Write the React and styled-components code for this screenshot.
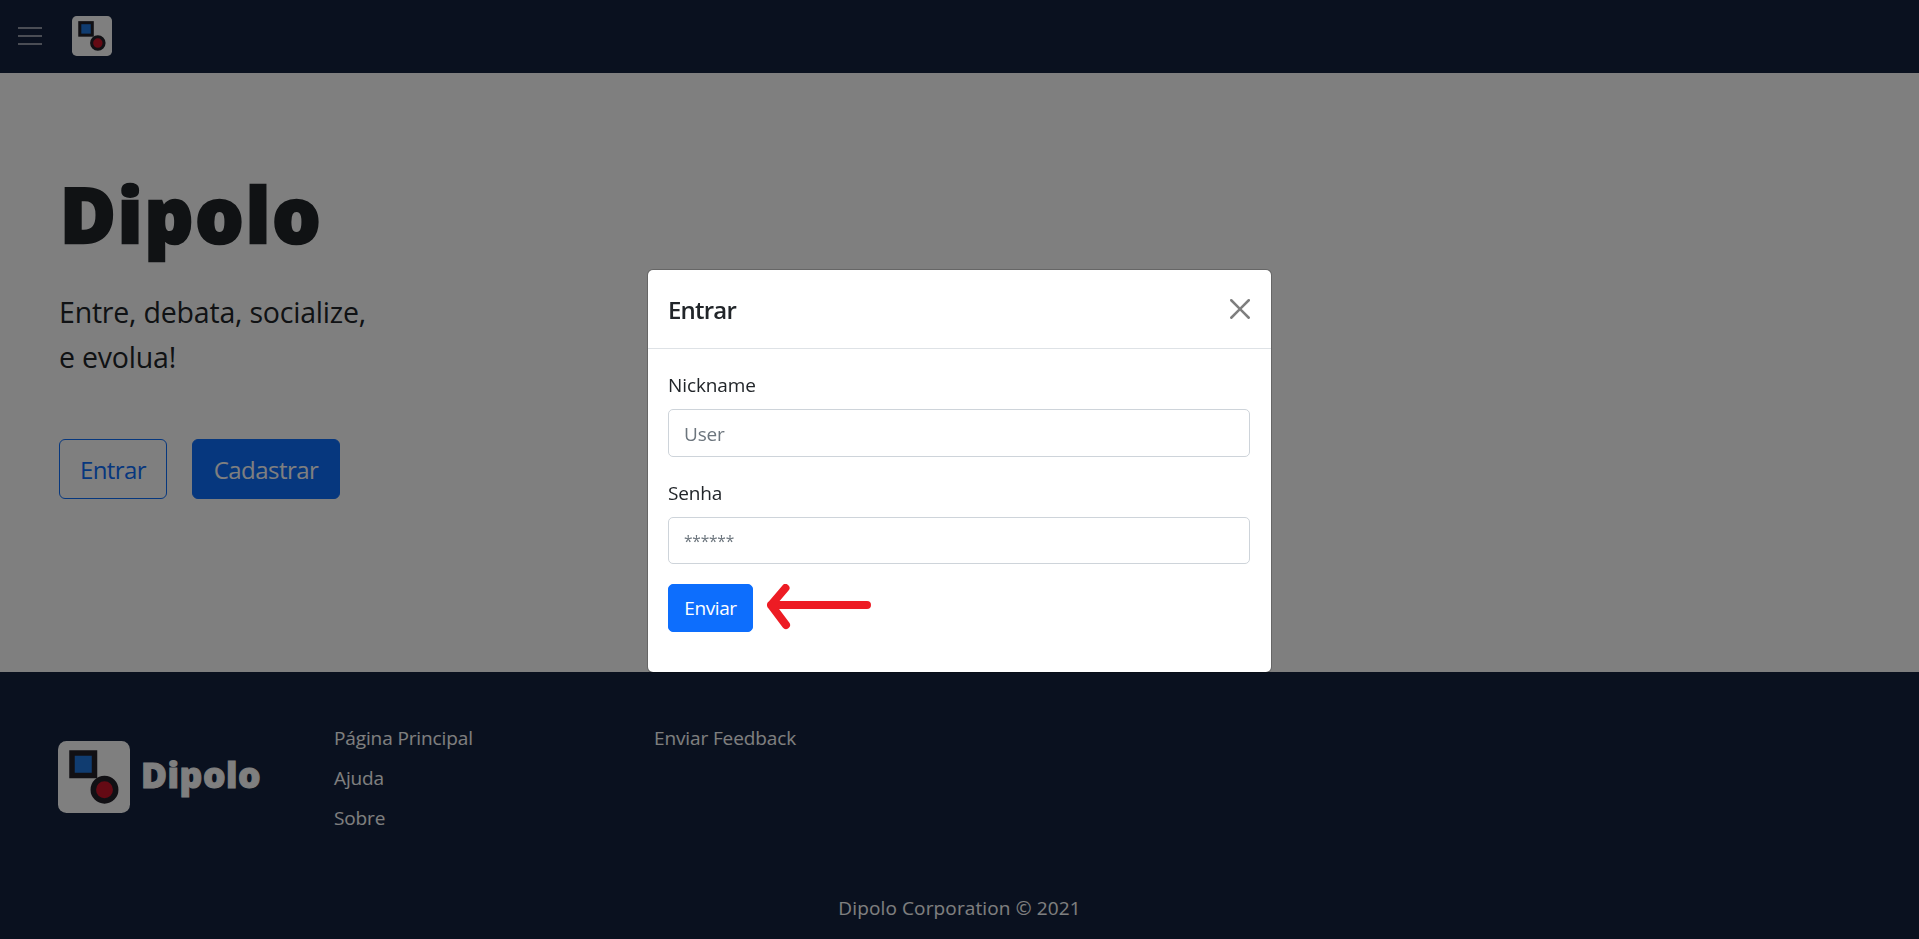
import React from 'react';
import styled, { createGlobalStyle, css } from 'styled-components';

const Global = createGlobalStyle`
  * { box-sizing: border-box; }
  body {
    margin: 0;
    height: 939px;
    overflow: hidden;
    background: #fff;
    color: #212529;
    font-family: "Open Sans", "Noto Sans", sans-serif;
    font-size: 19px;
    line-height: 30px;
  }
`;

const Page = styled.div`
  display: flex;
  flex-direction: column;
  height: 939px;
`;

const Navbar = styled.header`
  flex: none;
  height: 73px;
  display: flex;
  align-items: center;
  gap: 30px;
  padding: 0 18px 1px;
  background: #15233e;
`;

const MenuButton = styled.button`
  display: flex;
  padding: 0;
  border: 0;
  background: none;
  color: rgba(255, 255, 255, 0.55);
`;

const Hero = styled.main`
  flex: 1;
  padding: 93px 59px 0;
`;

const HeroTitle = styled.h1`
  margin: 0;
  padding-left: 1px;
  font-size: 76px;
  line-height: 96px;
  font-weight: 800;
  -webkit-text-stroke: 2.4px currentColor;
  letter-spacing: ${(p) => p.$spacing}px;
`;

const Lead = styled.p`
  margin: 28px 0 0;
  font-size: 28.5px;
  line-height: 45px;
  font-weight: 400;
  letter-spacing: ${(p) => p.$spacing}px;
`;

const HeroActions = styled.div`
  display: flex;
  gap: 25px;
  margin-top: 59px;
`;

const Button = styled.button`
  height: ${(p) => (p.$large ? 60 : 48)}px;
  width: ${(p) => p.$width}px;
  padding: ${(p) => (p.$large ? '2px 0 0' : '1px 0 0')};
  border: 1px solid #0d6efd;
  border-radius: ${(p) => (p.$large ? 6 : 5)}px;
  font-family: inherit;
  font-size: ${(p) => (p.$large ? 24 : 19)}px;
  line-height: 1.5;
  letter-spacing: ${(p) => p.$spacing || 0}px;
  ${(p) =>
    p.$outline
      ? css`
          background: transparent;
          color: #0d6efd;
        `
      : css`
          background: #0d6efd;
          color: #fff;
        `}
`;

const Footer = styled.footer`
  flex: none;
  height: 267px;
  background: #15233e;
  color: #fff;
`;

const FooterTop = styled.div`
  display: flex;
  height: 187px;
  padding: 46px 58px 0;
`;

const Brand = styled.div`
  display: flex;
  align-items: center;
  gap: 11px;
  width: 276px;
  height: 118px;
`;

const BrandName = styled.span`
  font-size: 35.5px;
  line-height: 48px;
  font-weight: 800;
  -webkit-text-stroke: 1px currentColor;
  letter-spacing: ${(p) => p.$spacing}px;
  padding-bottom: 6px;
`;

const LinkColumn = styled.nav`
  display: flex;
  flex-direction: column;
  gap: 10px;
  width: 320px;
  padding-top: 5px;
`;

const FooterLink = styled.a`
  color: inherit;
  letter-spacing: -0.12px;
`;

const Copyright = styled.div`
  padding-top: 34px;
  text-align: center;
  letter-spacing: ${(p) => p.$spacing}px;
`;

const Backdrop = styled.div`
  position: fixed;
  inset: 0;
  display: flex;
  justify-content: center;
  align-items: flex-start;
  padding-top: 269px;
  background: rgba(0, 0, 0, 0.5);
`;

const Dialog = styled.section`
  width: 625px;
  height: 404px;
  border: 1px solid rgba(0, 0, 0, 0.2);
  border-radius: 6px;
  background: #fff;
  background-clip: padding-box;
`;

const DialogHeader = styled.div`
  display: flex;
  align-items: center;
  justify-content: space-between;
  height: 79px;
  padding: 0 21px 0 20px;
  border-bottom: 1px solid #dee2e6;
`;

const DialogTitle = styled.h5`
  margin: 0;
  padding-top: 2px;
  font-size: 24px;
  font-weight: 600;
  line-height: 36px;
  letter-spacing: ${(p) => p.$spacing}px;
`;

const CloseButton = styled.button`
  display: flex;
  padding: 0;
  border: 0;
  background: none;
  opacity: 0.5;
`;

const Form = styled.form`
  padding: 21px 21px 20px 20px;
`;

const Field = styled.label`
  display: block;
  margin-bottom: ${(p) => p.$gap}px;
  letter-spacing: ${(p) => p.$spacing}px;
`;

const Input = styled.input`
  display: block;
  width: 100%;
  height: ${(p) => p.$height}px;
  margin-top: 9px;
  padding: 1px 15px 0;
  border: 1px solid #ced4da;
  border-radius: 5px;
  font: inherit;
  font-size: ${(p) => (p.type === 'password' ? 15.5 : 19)}px;
  letter-spacing: ${(p) => p.$spacing || 0}px;
  &::placeholder {
    color: #6c757d;
    opacity: 1;
  }
`;

const SubmitRow = styled.div`
  display: flex;
  gap: 14px;
`;

function Logo({ size }) {
  return (
    <svg width={size} height={size} viewBox="0 0 72 72">
      <rect width="72" height="72" rx="8.5" fill="#fff" />
      <rect x="14" y="12" width="22.5" height="22.5" fill="#2078e0" stroke="#232129" strokeWidth="5.5" />
      <circle cx="46.5" cy="48.7" r="11.2" fill="#c81428" stroke="#232129" strokeWidth="5.5" />
    </svg>
  );
}

export default function App() {
  return (
    <>
      <Global />
      <Page>
        <Navbar>
          <MenuButton aria-label="Menu">
            <svg width="24" height="18" viewBox="0 0 24 18" stroke="currentColor" strokeWidth="2">
              <path d="M0 1H24M0 9H24M0 17H24" />
            </svg>
          </MenuButton>
          <Logo size={40} />
        </Navbar>
        <Hero>
          <HeroTitle $spacing={2}>Dipolo</HeroTitle>
          <Lead $spacing={-0.2}>
            Entre, debata, socialize,
            <br />e evolua!
          </Lead>
          <HeroActions>
            <Button $large $outline $width={108} $spacing={-0.6}>Entrar</Button>
            <Button $large $width={148} $spacing={-0.55}>Cadastrar</Button>
          </HeroActions>
        </Hero>
        <Footer>
          <FooterTop>
            <Brand>
              <Logo size={72} />
              <BrandName $spacing={0.5}>Dipolo</BrandName>
            </Brand>
            <LinkColumn>
              <FooterLink>Página Principal</FooterLink>
              <FooterLink>Ajuda</FooterLink>
              <FooterLink>Sobre</FooterLink>
            </LinkColumn>
            <LinkColumn>
              <FooterLink>Enviar Feedback</FooterLink>
            </LinkColumn>
          </FooterTop>
          <Copyright $spacing={0.13}>Dipolo Corporation © 2021</Copyright>
        </Footer>
      </Page>
      <Backdrop>
        <Dialog>
          <DialogHeader>
            <DialogTitle $spacing={-0.8}>Entrar</DialogTitle>
            <CloseButton aria-label="Close">
              <svg width="20" height="20" viewBox="0 0 16 16" fill="#000">
                <path d="M.293.293a1 1 0 011.414 0L8 6.586 14.293.293a1 1 0 111.414 1.414L9.414 8l6.293 6.293a1 1 0 01-1.414 1.414L8 9.414l-6.293 6.293a1 1 0 01-1.414-1.414L6.586 8 .293 1.707a1 1 0 010-1.414z" />
              </svg>
            </CloseButton>
          </DialogHeader>
          <Form>
            <Field $gap={21} $spacing={-0.1}>
              Nickname
              <Input placeholder="User" $height={48} $spacing={-0.2} />
            </Field>
            <Field $gap={20} $spacing={-0.15}>
              Senha
              <Input type="password" placeholder="******" $height={47} $spacing={-0.2} />
            </Field>
            <SubmitRow>
              <Button type="button" $width={85} $spacing={-0.4}>Enviar</Button>
              <svg width="106" height="48" viewBox="0 0 106 48" fill="none" stroke="#ed1c24" strokeWidth="8" strokeLinecap="round" strokeLinejoin="round">
                <path d="M18.5 4L4 21L19 41M4 21H100" />
              </svg>
            </SubmitRow>
          </Form>
        </Dialog>
      </Backdrop>
    </>
  );
}
